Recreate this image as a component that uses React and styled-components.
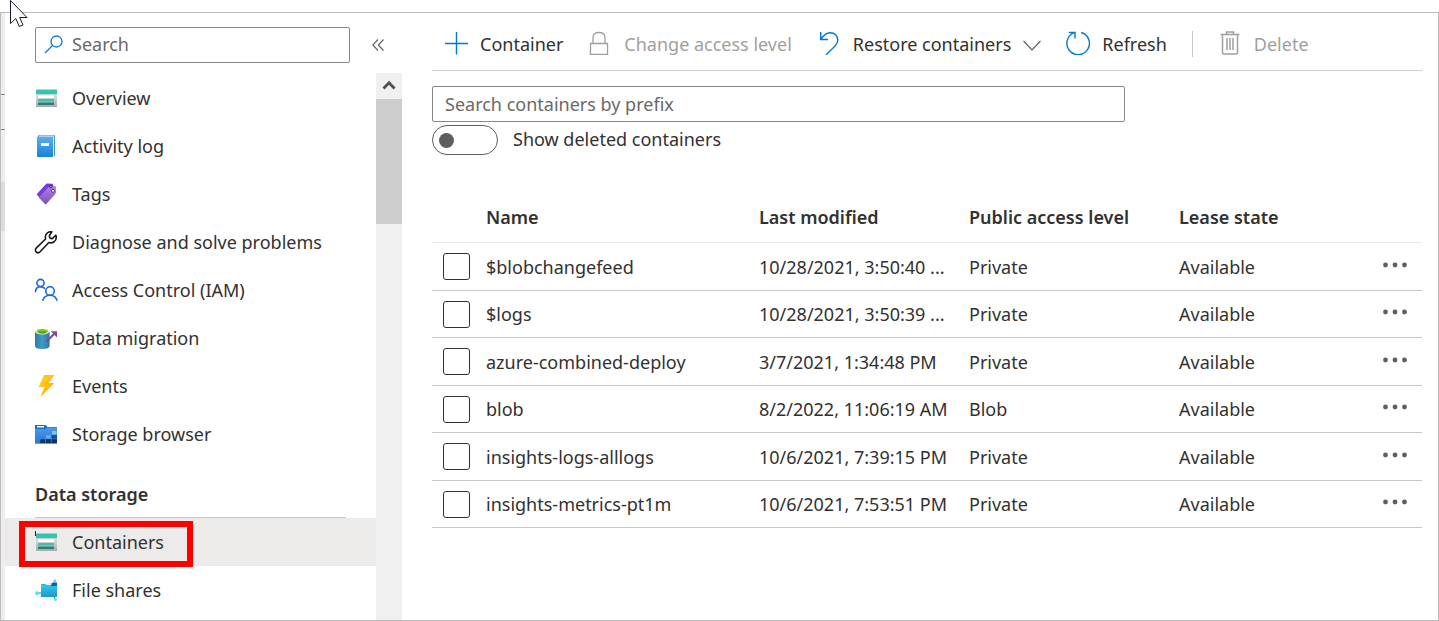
import React from 'react';
import styled, { createGlobalStyle } from 'styled-components';

const GlobalStyle = createGlobalStyle`
  * { box-sizing: border-box; }
  body {
    margin: 0;
    background: #fff;
    color: #323130;
    font-family: 'Noto Sans', 'Liberation Sans', sans-serif;
    font-size: 18px;
    line-height: 24px;
  }
  button, input { font: inherit; color: inherit; }
`;

const Page = styled.div`
  position: relative;
  display: flex;
  min-height: 100vh;
  padding-top: 12px;
`;

const Pointer = styled.svg`
  position: absolute;
  top: 0;
  left: 9px;
  z-index: 2;
`;

const Frame = styled.div`
  flex: 1;
  display: flex;
  border: 1px solid #bdbdbd;
`;

const Edge = styled.div`
  flex: none;
  width: 4px;
  padding-top: 81px;
  background: #efeded;
`;

const EdgeField = styled.div`
  height: 36px;
  border: solid #8a8886;
  border-width: 1px 0;
`;

const EdgeSelection = styled.div`
  height: 49px;
  margin-top: 52px;
  background: #dddbd9;
`;

const Sidebar = styled.aside`
  flex: none;
  width: 397px;
  display: flex;
  flex-direction: column;
`;

const SidebarHeader = styled.div`
  display: flex;
  align-items: center;
  gap: 20px;
  padding: 14px 16px 10px 30px;
`;

const SearchField = styled.label`
  flex: 1;
  display: flex;
  align-items: center;
  gap: 8px;
  height: 36px;
  padding: 0 8px 2px;
  border: 1px solid #8a8886;
  border-radius: 2px;
`;

const SearchInput = styled.input`
  flex: 1;
  min-width: 0;
  padding: 0;
  border: 0;
  outline: 0;
  background: transparent;
  &::placeholder { color: #6b6967; opacity: 1; }
`;

const IconButton = styled.button`
  display: flex;
  padding: 0 2px;
  border: 0;
  background: transparent;
`;

const SidebarBody = styled.div`
  flex: 1;
  display: flex;
`;

const Nav = styled.nav`
  flex: 1;
  padding-top: 1px;
`;

const NavList = styled.ul`
  margin: 0;
  padding: 0;
  list-style: none;
`;

const NavItem = styled.li`
  position: relative;
  background: ${(p) => (p.$selected ? '#edebe9' : 'transparent')};
`;

const NavLink = styled.a`
  display: flex;
  align-items: center;
  gap: 14px;
  height: 48px;
  padding-left: 29px;
  color: inherit;
  text-decoration: none;
`;

const Highlight = styled.span`
  position: absolute;
  top: 3px;
  left: 14px;
  width: 174px;
  height: 46px;
  border: 6px solid #f00;
  pointer-events: none;
`;

const SectionTitle = styled.h2`
  margin: 0 30px;
  padding: 24px 0 11px;
  border-bottom: 1px solid #c8c6c4;
  font-size: 18px;
  line-height: 24px;
  font-weight: 600;
`;

const Scrollbar = styled.div`
  width: 26px;
  background: #f0f0f0;
`;

const ScrollUp = styled.button`
  display: flex;
  align-items: center;
  justify-content: center;
  width: 26px;
  height: 26px;
  padding: 0;
  border: 0;
  background: transparent;
`;

const ScrollThumb = styled.div`
  height: 125px;
  background: #cdcdcd;
`;

const Main = styled.main`
  flex: 1;
  min-width: 0;
  padding: 0 16px 0 30px;
`;

const Toolbar = styled.div`
  display: flex;
  align-items: center;
  gap: 25px;
  height: 58px;
  padding: 4px 0 0 12px;
  border-bottom: 1px solid #d2d0ce;
`;

const Command = styled.button`
  display: flex;
  align-items: center;
  gap: 12px;
  padding: 0;
  border: 0;
  background: transparent;
  white-space: nowrap;
  &:disabled { color: #a19f9d; }
  svg { margin-bottom: 2px; }
`;

const Divider = styled.span`
  width: 1px;
  height: 26px;
  background: #c8c6c4;
`;

const PrefixInput = styled.input`
  display: block;
  width: 70%;
  height: 36px;
  margin-top: 15px;
  padding: 0 12px;
  border: 1px solid #8a8886;
  border-radius: 2px;
  background: #fff;
  &::placeholder { color: #6b6967; opacity: 1; }
`;

const ToggleRow = styled.label`
  display: flex;
  gap: 15px;
  width: fit-content;
  margin-top: 3px;
  line-height: 28px;
`;

const Toggle = styled.input`
  appearance: none;
  display: flex;
  align-items: center;
  width: 66px;
  height: 30px;
  margin: 0;
  padding: 0 6px;
  border: 1px solid #605e5c;
  border-radius: 15px;
  &::before {
    content: '';
    width: 15px;
    height: 15px;
    border-radius: 50%;
    background: #605e5c;
  }
  &:checked { justify-content: flex-end; }
`;

const Table = styled.table`
  width: 100%;
  margin-top: 37px;
  table-layout: fixed;
  border-collapse: separate;
  border-spacing: 0;
`;

const Column = styled.col`
  width: ${(p) => p.$width};
`;

const HeaderCell = styled.th`
  height: 51px;
  padding: 0;
  border-bottom: 1px solid #edebe9;
  font-weight: 600;
  text-align: left;
  white-space: nowrap;
`;

const Row = styled.tr`
  height: 48px;
  &:nth-child(even) { height: 47px; }
`;

const Cell = styled.td`
  padding: 0;
  border-bottom: 1px solid #c8c6c4;
  white-space: nowrap;
`;

const Checkbox = styled.input`
  appearance: none;
  display: block;
  width: 27px;
  height: 27px;
  margin: 0 11px;
  border: 1px solid #323130;
  border-radius: 3px;
  &:checked { background: #0078d4; }
`;

const MoreButton = styled(IconButton)`
  padding: 0 0 4px 2px;
`;

const Icon = ({ size = 24, children }) => (
  <svg width={size} height={size} viewBox={`0 0 ${size} ${size}`} fill="none" aria-hidden="true">
    {children}
  </svg>
);

const StorageIcon = ({ id, children }) => (
  <Icon>
    <defs>
      <linearGradient id={id} x1="0" y1="0" x2="0" y2="1">
        <stop offset="0" stopColor="#e3e3e3" />
        <stop offset="1" stopColor="#a9a9a9" />
      </linearGradient>
    </defs>
    <path d="M2 8h21v12.4q0 .6-.6.6H2.600q-.6 0-.6-.6z" fill={`url(#${id})`} />
    <path d="M2 4q0-.5.5-.5h20q.5 0 .5.5v4.200H2z" fill="#37c2b1" />
    <path d="M4 9.500h16V12H4z" fill="#fff" />
    <path d="M4 13h16v2.500H4z" fill="#37c2b1" />
    <path d="M4 16.500h16V19H4z" fill="#258277" />
    {children}
  </Icon>
);

const ContainersIcon = () => (
  <StorageIcon id="containers">
    <path d="M1.500 1v5" stroke="#222" />
  </StorageIcon>
);

const LogIcon = () => (
  <Icon>
    <defs>
      <linearGradient id="log" x1="0" y1="0" x2="0" y2="1">
        <stop offset="0" stopColor="#5aaef0" />
        <stop offset="1" stopColor="#1683d8" />
      </linearGradient>
    </defs>
    <path d="M5 1h15q1 0 1 1v20H19V4H3.500q0-2 1.500-3z" fill="#1b80cf" />
    <path d="M5.500 1.300h15L19.500 4H4z" fill="#b9cfdf" />
    <path d="M19 3.500 20.200 2v19.500L19 23z" fill="#e8f2fa" />
    <path d="M3 3h16v20H4q-1 0-1-1z" fill="url(#log)" />
    <path d="M7 9h8v3H7z" fill="#fff" />
  </Icon>
);

const TagIcon = () => (
  <Icon>
    <defs>
      <linearGradient id="tag" x1="0" y1="0" x2="0" y2="1">
        <stop offset="0" stopColor="#b482e8" />
        <stop offset="1" stopColor="#7a4fb0" />
      </linearGradient>
    </defs>
    <path d="M2.600 12.200 11.600 2.400q.9-.9 2-.8l4.500.2q1.200.1 1.200 1.300v5L8.500 19z" fill="#773adc" />
    <path d="M4.800 15.500 15 4.500q.8-.8 1.800-.7l4 .3q1.100.1 1.100 1.200v5.300q0 .8-.6 1.400L11.600 22.800z" fill="url(#tag)" />
    <circle cx="16.800" cy="4.500" r="1.300" stroke="#3d1d83" />
    <circle cx="18.900" cy="8.800" r="1.500" fill="#fff" stroke="#5a2ca0" />
  </Icon>
);

const WrenchIcon = () => (
  <Icon>
    <path
      d="M17.800 1.900C14.500 1.200 11.500 3.500 11.300 6.800c0 .9.100 1.500.3 2.200L2.400 17.900c-1.500 1.500-1.100 3.400 0 4.200 1.100.9 2.700.7 3.700-.4L14.800 12.500c3.900 1.300 7.600-1.500 7.500-5.300 0-.7-.2-1.400-.5-2L18.300 8.600 16 8.100 15.300 5.700z"
      stroke="#1b1a19"
      strokeWidth="1.600"
      strokeLinejoin="round"
    />
  </Icon>
);

const PeopleIcon = () => (
  <Icon>
    <g stroke="#1b66de" strokeWidth="1.600">
      <circle cx="6.500" cy="5" r="3.600" />
      <circle cx="16" cy="13" r="4.300" />
      <path d="M1.500 14.300C1.500 10.800 3.500 8.800 6.500 8.800c2 0 3.500.7 4.400 2" />
      <path d="M8.700 22.800c.8-3.500 3.300-5.500 7.300-5.500 3.800 0 6.200 2 7 5.500" />
    </g>
  </Icon>
);

const MigrationIcon = () => (
  <Icon>
    <defs>
      <linearGradient id="cylinder">
        <stop offset="0" stopColor="#2e7dab" />
        <stop offset=".5" stopColor="#4199c4" />
        <stop offset="1" stopColor="#2c78a4" />
      </linearGradient>
    </defs>
    <path d="M1 5.500V20q0 2.900 7.300 2.900t7.300-2.900V5.500z" fill="url(#cylinder)" />
    <ellipse cx="8.300" cy="5.500" rx="7.300" ry="2.900" fill="#eaf3e6" />
    <ellipse cx="8.300" cy="5.300" rx="5.800" ry="2.200" fill="#86c314" />
    <ellipse cx="8.300" cy="6.400" rx="4" ry="1.100" fill="#5f9f12" />
    <path d="M12.500 15.500 21 7" stroke="#804998" strokeWidth="2.200" />
    <path d="M16.800 5.200H23v6.200z" fill="#804998" />
  </Icon>
);

const BoltIcon = () => (
  <Icon>
    <path d="M10 1h10.300L14.500 9H20L6.400 23l4.100-10H4.700z" fill="#ffc61f" />
    <path d="M20.300 1 14.500 9H20L6.400 23 12 11.800 9.500 9.500z" fill="#fdb913" />
  </Icon>
);

const BrowserIcon = () => (
  <Icon>
    <defs>
      <linearGradient id="folder" x1="0" y1="0" x2="0" y2="1">
        <stop offset="0" stopColor="#5098ea" />
        <stop offset="1" stopColor="#2878d0" />
      </linearGradient>
    </defs>
    <path d="M1 3h10.500l2 2H23v5H1z" fill="#0f70d1" />
    <path d="M3 4h7v1.500H3z" fill="#fff" />
    <path d="M1 7h10l2-1.500h10v16.300H1z" fill="url(#folder)" />
    <path d="M18 9h4.500v3.500H18z" fill="#8bc0f7" />
    <path d="M12 13.200h4.700v3.300H12z" fill="#69adf2" />
    <path d="M17.600 13.200H23v3.300h-5.400z" fill="#0c51a0" />
    <path d="M6.300 17.300H11V21H6.300zM12 17.300h4.700V21H12zM17.600 17.300H23V21h-5.400z" fill="#093460" />
  </Icon>
);

const FileShareIcon = () => (
  <Icon>
    <defs>
      <linearGradient id="share" x1="0" y1="0" x2="0" y2="1">
        <stop offset="0" stopColor="#32c8ec" />
        <stop offset="1" stopColor="#1b9ac8" />
      </linearGradient>
    </defs>
    <path d="M3 15h5M20.500 3.500 19 8M20 18l1.500 4" stroke="#1e88b8" />
    <path d="M7 6.500 17 5.800l2-1.200h4V18H7z" fill="#145fa8" />
    <path d="M7 6.800h7.500L16 8h7v11H7z" fill="url(#share)" />
    <path d="M10 6.300 18 5.800 16.500 7.400z" fill="#fff" />
    <circle cx="3" cy="15.300" r="2" fill="#50e6ff" />
    <circle cx="20.800" cy="2.800" r="1.500" fill="#50e6ff" />
    <circle cx="21.500" cy="21.500" r="1.500" fill="#50e6ff" />
  </Icon>
);

const MagnifierIcon = () => (
  <Icon size={20}>
    <circle cx="12.500" cy="7.500" r="5.500" stroke="#0f78d4" strokeWidth="1.300" />
    <path d="M8.500 11.500 1 19" stroke="#0f78d4" strokeWidth="1.300" />
  </Icon>
);

const CollapseIcon = () => (
  <Icon size={12}>
    <path d="M6 .5.8 6 6 11.500M11.500.5 6.300 6l5.200 5.500" stroke="#605e5c" strokeWidth="1.100" />
  </Icon>
);

const ArrowUpIcon = () => (
  <Icon size={14}>
    <path d="M1.500 9.500 7 3.700l5.500 5.800" stroke="#505050" strokeWidth="2.800" />
  </Icon>
);

const PlusIcon = () => (
  <Icon>
    <path d="M12.500 1v22.500M1 12.500h23" stroke="#0078d4" strokeWidth="1.400" />
  </Icon>
);

const LockIcon = () => (
  <Icon>
    <path d="M2.500 12.500h17v11h-17zM5 12V6.500q0-5 6-5t6 5V12" stroke="#a19f9d" strokeWidth="1.300" />
  </Icon>
);

const UndoIcon = () => (
  <Icon>
    <path d="M3.700 1v7.500H11M4 8.200C7 3.500 9.500 1.700 13 1.700c4.600 0 7.800 3.100 7.800 7.300 0 2.500-.9 4-2.800 6L9 24" stroke="#0078d4" strokeWidth="1.400" />
  </Icon>
);

const ChevronIcon = () => (
  <Icon size={18}>
    <path d="M.5 7 9 16l8.500-9" stroke="#605e5c" strokeWidth="1.200" />
  </Icon>
);

const RefreshIcon = () => (
  <Icon>
    <path d="M15.200 1.500A11.300 11.300 0 1 1 8.500 1.700M2.800 1.500H9v6" stroke="#0078d4" strokeWidth="1.400" />
  </Icon>
);

const TrashIcon = () => (
  <Icon>
    <path d="M2.500 3.500h19M8.500 3V1h7v2M4.500 4v17.500Q4.500 23 6 23h12q1.500 0 1.500-1.500V4" stroke="#a19f9d" strokeWidth="1.500" />
    <path d="M9 7v12M12 7v12M15 7v12" stroke="#a19f9d" strokeWidth="1.500" />
  </Icon>
);

const DotsIcon = () => (
  <Icon>
    <g fill="#605e5c">
      <circle cx="2.500" cy="12" r="2.400" />
      <circle cx="12" cy="12" r="2.400" />
      <circle cx="21.500" cy="12" r="2.400" />
    </g>
  </Icon>
);

const generalItems = [
  { label: 'Overview', icon: <StorageIcon id="overview" /> },
  { label: 'Activity log', icon: <LogIcon /> },
  { label: 'Tags', icon: <TagIcon /> },
  { label: 'Diagnose and solve problems', icon: <WrenchIcon /> },
  { label: 'Access Control (IAM)', icon: <PeopleIcon /> },
  { label: 'Data migration', icon: <MigrationIcon /> },
  { label: 'Events', icon: <BoltIcon /> },
  { label: 'Storage browser', icon: <BrowserIcon /> },
];

const storageItems = [
  { label: 'Containers', icon: <ContainersIcon />, selected: true },
  { label: 'File shares', icon: <FileShareIcon /> },
];

const containers = [
  ['$blobchangefeed', '10/28/2021, 3:50:40 ...', 'Private', 'Available'],
  ['$logs', '10/28/2021, 3:50:39 ...', 'Private', 'Available'],
  ['azure-combined-deploy', '3/7/2021, 1:34:48 PM', 'Private', 'Available'],
  ['blob', '8/2/2022, 11:06:19 AM', 'Blob', 'Available'],
  ['insights-logs-alllogs', '10/6/2021, 7:39:15 PM', 'Private', 'Available'],
  ['insights-metrics-pt1m', '10/6/2021, 7:53:51 PM', 'Private', 'Available'],
];

const NavItems = ({ items }) => (
  <NavList>
    {items.map(({ label, icon, selected }) => (
      <NavItem key={label} $selected={selected}>
        <NavLink href="#" aria-current={selected ? 'page' : undefined}>
          {icon}
          {label}
        </NavLink>
        {selected && <Highlight />}
      </NavItem>
    ))}
  </NavList>
);

export default function App() {
  return (
    <>
      <GlobalStyle />
      <Page>
        <Pointer width="20" height="28" viewBox="0 0 20 28" aria-hidden="true">
          <path d="M1.500.5v23l5.300-5 3.500 8L14 25l-3.300-7.500H18z" fill="#fff" stroke="#1a1a2a" />
        </Pointer>
        <Frame>
          <Edge>
            <EdgeField />
            <EdgeSelection />
          </Edge>
          <Sidebar>
            <SidebarHeader>
              <SearchField>
                <MagnifierIcon />
                <SearchInput type="text" placeholder="Search" aria-label="Search" />
              </SearchField>
              <IconButton type="button" aria-label="Collapse menu">
                <CollapseIcon />
              </IconButton>
            </SidebarHeader>
            <SidebarBody>
              <Nav>
                <NavItems items={generalItems} />
                <SectionTitle>Data storage</SectionTitle>
                <NavItems items={storageItems} />
              </Nav>
              <Scrollbar>
                <ScrollUp type="button" aria-label="Scroll up">
                  <ArrowUpIcon />
                </ScrollUp>
                <ScrollThumb />
              </Scrollbar>
            </SidebarBody>
          </Sidebar>
          <Main>
            <Toolbar>
              <Command type="button"><PlusIcon />Container</Command>
              <Command type="button" disabled><LockIcon />Change access level</Command>
              <Command type="button"><UndoIcon />Restore containers<ChevronIcon /></Command>
              <Command type="button"><RefreshIcon />Refresh</Command>
              <Divider />
              <Command type="button" disabled><TrashIcon />Delete</Command>
            </Toolbar>
            <PrefixInput type="text" placeholder="Search containers by prefix" aria-label="Search containers by prefix" />
            <ToggleRow>
              <Toggle type="checkbox" role="switch" />
              Show deleted containers
            </ToggleRow>
            <Table>
              <colgroup>
                <Column $width="54px" />
                <Column $width="auto" />
                <Column $width="210px" />
                <Column $width="210px" />
                <Column $width="202px" />
                <Column $width="41px" />
              </colgroup>
              <thead>
                <tr>
                  <HeaderCell as="td" />
                  <HeaderCell scope="col">Name</HeaderCell>
                  <HeaderCell scope="col">Last modified</HeaderCell>
                  <HeaderCell scope="col">Public access level</HeaderCell>
                  <HeaderCell scope="col">Lease state</HeaderCell>
                  <HeaderCell as="td" />
                </tr>
              </thead>
              <tbody>
                {containers.map(([name, modified, access, lease]) => (
                  <Row key={name}>
                    <Cell><Checkbox type="checkbox" aria-label={`Select ${name}`} /></Cell>
                    <Cell>{name}</Cell>
                    <Cell>{modified}</Cell>
                    <Cell>{access}</Cell>
                    <Cell>{lease}</Cell>
                    <Cell>
                      <MoreButton type="button" aria-label={`More actions for ${name}`}>
                        <DotsIcon />
                      </MoreButton>
                    </Cell>
                  </Row>
                ))}
              </tbody>
            </Table>
          </Main>
        </Frame>
      </Page>
    </>
  );
}
